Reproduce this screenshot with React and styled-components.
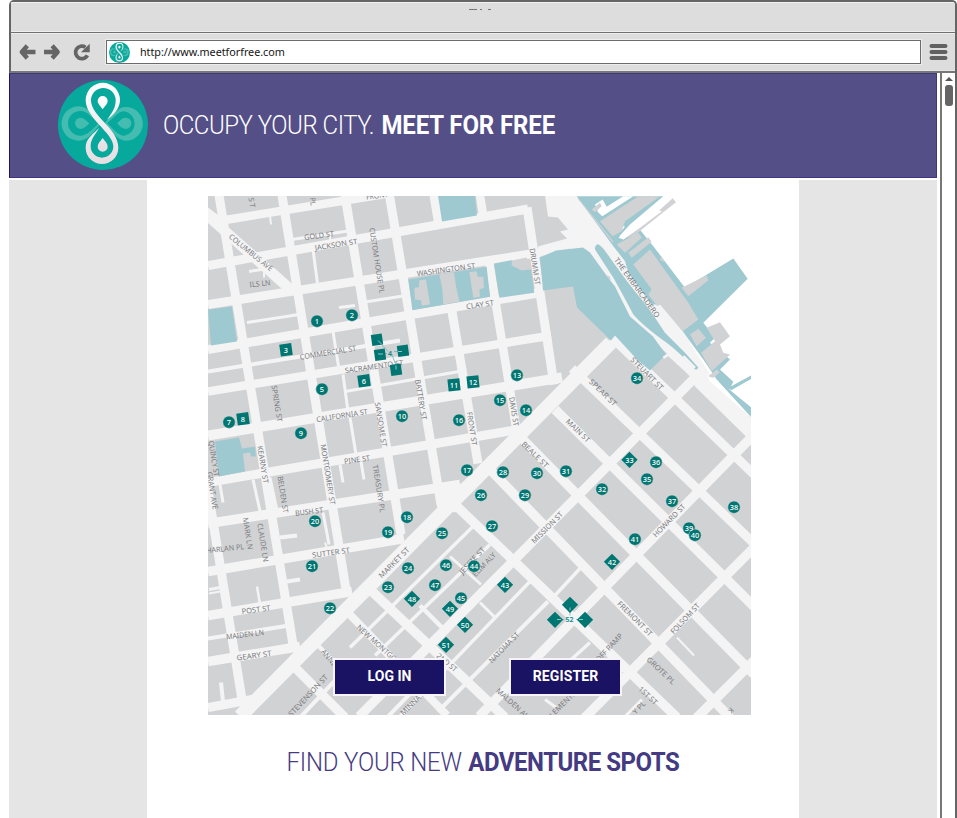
import React from 'react';
import styled, { createGlobalStyle } from 'styled-components';

const Global = createGlobalStyle`
  * { box-sizing: border-box; }
  body { margin: 0; background: #fff; font-family: 'Noto Sans', sans-serif; overflow: hidden; }
`;

const Frame = styled.div`
  width: 948px;
  height: 818px;
  margin-left: 9px;
  display: flex;
  flex-direction: column;
  border: 2px solid #656565;
  border-bottom: 0;
  border-left: 0;
  border-radius: 5px 5px 0 0;
  overflow: hidden;
`;
const TitleBar = styled.div`
  height: 31px;
  flex: none;
  background: #ddd;
  border-bottom: 1px solid #707070;
  border-left: 2px solid #656565;
  box-shadow: inset 0 1px #f2f2f2, inset 0 -1px #eee;
  padding: 4px 0 0 458px;
  line-height: 0;
`;
const ToolBar = styled.div`
  height: 40px;
  flex: none;
  display: flex;
  align-items: center;
  background: #ddd;
  border-bottom: 2px solid #777a74;
  border-left: 2px solid #656565;
  box-shadow: inset 0 1px #eee, inset 0 -1px #e6e6e6;
  padding: 0 7px;
`;
const NavIcons = styled.svg`
  width: 76px;
  height: 24px;
  display: block;
`;
const AddressBar = styled.div`
  width: 816px;
  height: 24px;
  margin-left: 12px;
  border: 1px solid #6c6c6c;
  box-shadow: 0 0 0 1px #ededed;
  background: #fff;
  display: flex;
  align-items: center;
  padding-left: 2px;
  gap: 10px;
  color: #151515;
`;
const Url = styled.span`
  font-size: 10.8px;
  letter-spacing: -0.03px;
  line-height: 20px;
`;
const MenuIcon = styled.svg`
  width: 19px;
  height: 18px;
  margin-left: 8px;
  display: block;
`;
const Viewport = styled.div`
  flex: 1;
  display: flex;
  min-height: 0;
`;
const Page = styled.div`
  width: 928px;
  height: 745px;
  flex: none;
  display: flex;
  flex-direction: column;
`;
const Banner = styled.header`
  height: 105px;
  flex: none;
  display: flex;
  align-items: center;
  padding: 0 0 1px 48px;
  gap: 15px;
  background: #554f88;
  border: 1px solid #3f3582;
  border-left: 1.5px solid #1e1464;
`;
const Logo = styled.svg`
  width: ${(p) => p.$size}px;
  height: ${(p) => p.$size}px;
  display: block;
  flex: none;
`;
const Headline = styled.h1`
  margin: 0;
  display: flex;
  gap: ${(p) => p.$gap}px;
  font-family: Roboto, sans-serif;
  font-size: 25.5px;
  line-height: 30px;
  font-weight: 300;
  white-space: nowrap;
  color: ${(p) => p.$color};
  transform: scaleX(0.94);
  transform-origin: ${(p) => p.$origin} center;
`;
const Phrase = styled.span`
  font-weight: ${(p) => (p.$bold ? 700 : 300)};
  letter-spacing: ${(p) => p.$track}px;
`;
const Body = styled.main`
  flex: 1;
  margin-top: 2px;
  display: flex;
  justify-content: center;
  background: #e5e5e5;
`;
const Sheet = styled.section`
  width: 652px;
  margin-right: 1px;
  background: #fff;
  display: flex;
  flex-direction: column;
  align-items: center;
  padding-top: 16px;
`;
const MapPanel = styled.div`
  width: 543px;
  height: 519px;
  position: relative;
  margin-left: 14px;
`;
const MapArt = styled.svg`
  display: block;
  width: 543px;
  height: 519px;
  font-family: 'Noto Sans', sans-serif;
`;
const Actions = styled.div`
  position: absolute;
  left: 125px;
  top: 462px;
  display: flex;
  gap: 63px;
`;
const Action = styled.button`
  width: 113px;
  height: 38px;
  padding: 0 0 2px;
  border: 2px solid #f6f3fa;
  background: #1a1262;
  color: #fff;
  font: 700 14px Roboto, sans-serif;
  letter-spacing: ${(p) => p.$track}px;
`;
const Tagline = styled.div`
  margin: 32px 0 0 20px;
`;
const Scroll = styled.div`
  width: 15px;
  margin-left: 3px;
  border-left: 2px solid #777;
  display: flex;
  flex-direction: column;
  align-items: center;
  padding: 4px 0 0 0;
  gap: 4px;
`;
const Thumb = styled.div`
  width: 8px;
  height: 21px;
  border-radius: 3px;
  background: #656565;
`;
const Arrow = styled.svg`
  width: 8px;
  height: 4px;
  display: block;
`;

function Mark({ size }) {
  return (
    <Logo $size={size} viewBox="173 241 270 270">
      <defs>
        <linearGradient id="sheen" x1="0" y1="0" x2="0" y2="1">
          <stop offset="0" stopColor="#fff" />
          <stop offset="1" stopColor="#e4dde2" />
        </linearGradient>
      </defs>
      <circle cx="308" cy="376" r="135" fill="#06a99c" />
      <g fill="#44bcb0" fillRule="evenodd">
        <path d="M302 370C280 347 263 320 235 320A51 51 0 0 0 235 423C265 423 280 395 302 370ZM296 370C273 353 260 334 240 334A37 37 0 0 0 240 408C260 408 275 390 296 370Z" />
        <path d="M314 370C336 347 350 322 377 322A50 50 0 0 1 377 423C350 423 336 395 314 370ZM320 370C343 353 353 335 372 335A37 37 0 0 1 372 408C353 408 341 390 320 370Z" />
        <path d="M267 371C255 360 249 354 241 354A17 17 0 0 0 241 388C249 388 256 382 267 371ZM350 371C361 360 367 354 376 354A17 17 0 0 1 376 388C367 388 361 382 350 371Z" />
      </g>
      <path d="M272 302C272 330 288 350 312 368C330 348 346 325 346 302ZM271 440C271 420 283 400 299 380C325 402 339 418 339 440Z" fill="#06a99c" />
      <g fill="url(#sheen)">
        <path d="M256 301A51 51 0 0 1 359 301C359 326 341 344 320 361C335 339 346 325 346 302A37 37 0 0 0 272 302C272 350 354 386 354 444A49 49 0 0 1 256 444C256 416 276 405 297 384C285 405 271 417 271 440A34 34 0 0 0 339 440C339 400 256 356 256 301Z" />
        <path d="M307 329C299 318 292 312 292 304A15 15 0 0 1 322 304C322 312 315 318 307 329ZM307 415C299 426 292 432 292 441A15 15 0 0 0 322 441C322 432 315 426 307 415Z" />
      </g>
    </Logo>
  );
}

/* Street centre lines: width, then end points. */
const ROADS = [
  [8, 219, 196, 293, 645], [8, 282, 196, 346, 590], [8, 345, 196, 401, 535],
  [8, 389.5, 196, 441, 505], [8, 434, 196, 439, 226], [8, 452, 312, 478, 464],
  [7.5, 480, 196, 483, 215], [7.5, 489, 262, 516, 428], [8, 527, 208, 554, 385],
  [7.5, 222, 221, 388, 194], [8, 208, 266, 528, 209.5], [8, 208, 305, 540, 253],
  [8, 208, 350, 541, 293], [7.5, 208, 392, 551, 336], [9, 208, 436, 562, 378],
  [8, 208, 483, 518, 430], [8.5, 208, 524, 460, 485], [8.5, 208, 572, 404, 539],
  [8.5, 208, 616, 352, 592], [4, 208, 639, 289, 626], [8.5, 208, 662, 300, 647],
  [8, 208, 708, 252, 700], [8, 207, 485, 243, 706], [9.5, 204, 213, 294, 293],
  [3, 247, 323, 299, 315], [4, 208, 372, 400, 341], [3, 362, 303, 406, 296],
  [3, 292, 240, 348, 231.5], [3, 313, 250, 318, 288], [3, 333, 332, 339, 370],
  [3, 343, 375, 348, 412], [3, 350, 418, 356, 455], [3, 340, 465, 343, 483],
  [3, 361, 462, 364, 480], [3, 253, 480, 261, 516], [3, 220, 485, 223, 503],
  [3, 270, 478, 278, 516], [4, 280, 538, 297, 536], [3, 323, 513, 329, 545],
  [3, 345, 392, 459, 372], [4, 287, 582, 300, 580], [2.5, 257, 587, 260, 605],
  [4, 221, 683, 223, 702], [3, 209, 590, 220, 588], [2, 209, 594, 220, 592],
  [3, 249, 272, 267, 269], [2, 264, 270, 264, 278], [2, 270, 216, 271, 225],
  [3, 339, 308, 355, 306], [2, 330, 236, 330, 241], [2, 325, 543, 327, 549],
  [13, 240, 717, 611, 343], [8, 612, 338, 754, 475], [8, 572, 369, 754, 544],
  [8.5, 555, 410, 754, 607], [8.5, 520, 437, 754, 675], [8.5, 490, 470, 730, 718],
  [8.5, 455, 505, 677, 718], [8.5, 370, 590, 505, 718], [7, 348, 613, 447, 716],
  [8.5, 290, 663, 345, 718], [8.5, 359, 717, 702, 371], [8.5, 479, 717, 754, 435],
  [8.5, 583, 720, 754, 548], [8.5, 695, 720, 754, 661], [3.5, 350, 648, 475, 525],
  [3.5, 375, 656, 490, 545], [3, 450, 557, 481, 585], [4.5, 420, 606, 443, 629],
  [3.5, 400, 717, 530, 582], [4, 438, 712, 548, 602], [3, 480, 603, 495, 618],
  [3.5, 553, 598, 580, 569], [3.5, 558, 672, 590, 643], [2, 677, 638, 694, 656],
  [4, 318, 646, 338, 666], [4, 388, 717, 420, 684], [3, 545, 700, 556, 708],
  [3, 642, 700, 625, 717], [4, 300, 718, 336, 680],
];

/* text, centre x, centre y, angle, drawn length */
const STREETS = [
  ['COLUMBUS AVE', 251, 253, 39, 54], ['GOLD ST', 319, 236, -7, 30], ['JACKSON ST', 336, 245, -9, 43],
  ['CUSTOM HOUSE PL', 377, 261, 81, 66], ['ILS LN', 260, 284, -6, 21], ['ST', 252, 203, 81, 10], ['PL', 313, 202, 81, 8],
  ['COMMERCIAL ST', 328, 353, -9, 57], ['SACRAMENTO ST', 374, 367, -8, 59], ['WASHINGTON ST', 446, 270, -8, 59],
  ['CLAY ST', 480, 305, -8, 28], ['DRUMM ST', 535, 267, 81, 37], ['THE EMBARCADERO', 637, 288, 54, 72],
  ['STEUART ST', 647, 374, 45, 43], ['SPEAR ST', 603, 393, 44, 35], ['MAIN ST', 578, 431, 44, 30],
  ['BEALE ST', 535, 455, 44, 34], ['SPRING ST', 277, 404, 81, 37], ['CALIFORNIA ST', 342, 416, -9, 52],
  ['SANSOME ST', 381, 425, 81, 45], ['BATTERY ST', 421, 400, 81, 41], ['FRONT ST', 472, 429, 81, 34],
  ['DAVIS ST', 514, 412, 81, 29], ['QUINCY ST', 214, 459, 81, 36], ['GRANT AVE', 212.5, 491, 81, 38],
  ['KEARNY ST', 263, 465, 81, 38], ['BELDEN ST', 283, 495, 81, 37], ['MONTGOMERY ST', 328, 475, 81, 61],
  ['PINE ST', 357, 460, -8, 26], ['TREASURY PL', 379, 489, 81, 48], ['BUSH ST', 309, 512, -7, 28],
  ['MARK LN', 248, 534, 81, 32], ['CLAUDE LN', 263, 543, 81, 39], ['HARLAN PL', 225, 549, -6, 38],
  ['SUTTER ST', 331, 553, -8, 38], ['POST ST', 256, 610, -7, 29], ['MAIDEN LN', 245, 635, -7, 38],
  ['GEARY ST', 254, 656, -8, 35], ['MARKET ST', 394, 563, -45, 40], ['MISSION ST', 547, 528, -45, 41],
  ['HOWARD ST', 669, 521, -46, 43], ['FOLSOM ST', 685, 619, -47, 39], ['FREMONT ST', 635, 619, 45, 46],
  ['JESSIE ST', 472, 561, -47, 34], ['ELIM ALY', 484, 565, -46, 30], ['NATOMA ST', 504, 648, -46, 40],
  ['2ND ST', 447, 663, 40, 24], ['NEW MONTGOMERY', 384, 650, 42, 70], ['ANNIE ST', 333, 663, 50, 32],
  ['STEVENSON ST', 308, 696, -47, 54], ['MINNA ST', 414, 702, -45, 35], ['MALDEN ALY', 514, 705, 42, 45],
  ['CLEMENTINA', 564, 703, -45, 48], ['OFF RAMP', 609, 648, -47, 36], ['GROTE PL', 661, 671, 43, 36],
  ['1ST ST', 648, 696, 43, 23], ['Y PL', 639, 708, -45, 15], ['FRONT', 377, 196, -8, 22], ['K', 731, 711, 135, 5],
];

const DOTS = [
  [1, 317, 321], [2, 352, 315], [5, 322, 389], [7, 229, 422], [9, 301, 433], [10, 402, 416], [13, 517, 375],
  [14, 526, 410], [15, 500, 400], [16, 459, 420], [17, 467, 470], [18, 407, 517], [19, 388, 532], [20, 315, 521],
  [21, 312, 566], [22, 330, 608], [23, 388, 587], [24, 408, 568], [25, 442, 533], [26, 481, 495], [27, 492, 526],
  [28, 503, 472], [29, 525, 495], [30, 537, 473], [31, 566, 471], [32, 602, 489], [34, 637, 378], [35, 647, 479],
  [36, 656, 462], [37, 672, 501], [38, 734, 507], [39, 689, 528], [40, 695, 535], [41, 635, 539],
  [44, 474, 566], [45, 461, 598], [46, 446, 565], [47, 435, 585],
];
/* label, x, y, angle, side */
const BOXES = [
  [3, 286, 350, -8, 12], [6, 364, 381, -8, 12], [8, 243, 419, -8, 12], [11, 454, 385, -6, 12], [12, 473, 382, -6, 12],
  [33, 629.5, 460, 45, 11.5], [42, 612, 562, 45, 11.5], [43, 505, 585, 45, 11.5], [48, 412, 599, 45, 11.5],
  [49, 450, 609, 45, 11.5], [50, 465, 625, 45, 11.5], [51, 446, 645, 45, 11.5],
  ['', 377, 340, -8, 11], ['', 380, 355, -8, 11], ['', 403, 351, -8, 11], ['', 396, 370, -8, 11],
  ['', 570, 605, 45, 11.5], ['', 555, 620, 45, 11.5], ['', 585, 620, 45, 11.5],
];

function CityMap() {
  return (
    <MapArt viewBox="208 196.5 543 519">
      <rect x="208" y="196" width="544" height="520" fill="#d1d2d4" />
      <g stroke="#f4f4f5">
        {ROADS.map(([w, x1, y1, x2, y2], i) => (
          <line key={i} strokeWidth={w > 6 ? w + 1 : w} x1={x1} y1={y1} x2={x2} y2={y2} />
        ))}
      </g>
      <path fill="#f4f4f5" d="M208 208L224 220L224 236L208 222ZM545 196L548 217L558 218L568 230L560 232L567 239L538 247L540 257L570 249L612 290L630 320L666 353L690 377L695 387L745 436L752 443V400L700 330L640 196Z" />
      <path fill="#f4f4f5" d="M437 495L468 481L464 498L455 513L437 508Z" />
      <path fill="#fff" d="M577 196H752V419L710 382L685 333L613 245Z" />
      <g fill="#9fc9d0">
        <path d="M438 196H475L477 216L442 222ZM208 310L232 307L237 342L211 346ZM215 442L239 438L242 449L255 447L256 457L251 457L250 453L243 454L245 472L219 477Z" />
        <path d="M540 258L556 251L583 248L590 253L608 278L615 287L630 317L653 337L666 355L650 371L637 360L615 336L611 341L577 308L573 287L543 291Z" />
      </g>
      <g transform="translate(380 190) scale(.33333)">
        <path fill="#9fc9d0" d="M85 270L320 232L330 322L97 362ZM342 222L395 212L425 240H453L463 310L358 325Z" />
        <path fill="#d1d2d4" d="M178 255L222 248L228 290L238 337L190 345L187 300ZM118 272L138 270L150 345L125 348L123 332L105 330L103 295L117 293ZM268 248L290 245L293 262L310 262L312 295L298 300L300 322L280 325ZM395 213L440 204L450 240L425 243L395 228Z" />
      </g>
      <g transform="translate(570 190) scale(.33333)">
        <path fill="#9fc9d0" d="M20 20L130 170L165 215L175 250L245 345L275 345L345 435L400 510L440 570L545 685V655L478 600L490 577L450 540L480 510L455 490L420 460L435 445L400 400L533 268L490 207L345 295L250 170L205 115L160 150L148 140L180 105L280 20Z" />
        <path fill="#9fc9d0" d="M75 180Q74 166 84 164Q94 166 120 205Q180 290 215 330Q270 405 310 445L385 530Q384 542 375 540Q330 490 290 460Q220 410 190 375Q150 300 130 265Z" />
        <path fill="#fff" d="M84 68L97 80L190 20H160L110 52L98 30L75 45ZM145 145L270 60L278 70L160 150ZM165 110L160 118L145 130L150 112Z" />
        <path fill="#f4f4f5" d="M270 355L285 360L340 428L395 515L430 570L395 545L345 490L285 430L245 370Z" />
        <g fill="#d1d2d4">
          <path d="M20 20L130 155L128 160L25 30ZM90 95L205 20H270L165 95L155 125L128 140ZM65 60L90 40L95 50L75 68ZM140 165L205 130L215 145L165 190ZM175 190L235 143L245 157L185 205ZM190 225L240 180L355 340L385 390L338 425L270 345L262 350L235 315L245 300ZM335 295L410 258L415 272L355 320ZM360 435L385 418L408 445L380 470ZM410 415L450 398L480 440L450 465L460 490L480 495L425 545L393 490L435 455ZM268 62L308 26L318 38L280 68ZM275 200L285 220L270 210ZM105 255L120 262L122 272ZM415 560L440 540L450 548L430 565Z" />
          <path d="M170 145L276 65L279 69L190 140Z" />
        </g>
        <path fill="#9fc9d0" d="M478 593L545 557V567L482 603Z" />
        <path stroke="#f4f4f5" strokeWidth="8" fill="none" d="M280 505L295 495L345 540M340 500L375 535" />
      </g>
      <g fill="#7b7c7f" fontSize="7.4" textAnchor="middle">
        {STREETS.map(([name, x, y, a, len]) => (
          <text key={name + x} transform={`translate(${x} ${y}) rotate(${a})`} y="2.7" textLength={len} lengthAdjust={name.length > 3 ? 'spacingAndGlyphs' : 'spacing'}>
            {name}
          </text>
        ))}
      </g>
      <g stroke="#5ab0b6" strokeWidth=".7">
        <path d="M377 340L388 352M382 354H387M394 352H400M392 355L396 366M570 607V616M557 620H564M576 620H583" />
      </g>
      <g fill="#007672">
        {DOTS.map(([n, x, y]) => (
          <circle key={n} cx={x} cy={y + 0.7} r="6.2" stroke="#eadfe0" strokeWidth=".5" />
        ))}
        {BOXES.map(([n, x, y, a, s], i) => (
          <rect key={i} x={-s / 2} y={-s / 2} width={s} height={s} transform={`translate(${x} ${y + 0.3}) rotate(${a})`} />
        ))}
      </g>
      <g fill="#fff" fontSize="7.4" fontWeight="500" textAnchor="middle">
        {[...DOTS, ...BOXES].map(([n, x, y], i) => (
          <text key={i} x={x - 0.1} y={y + 3.3}>{n}</text>
        ))}
      </g>
      <g fill="#07888a" fontSize="7" fontWeight="600" textAnchor="middle">
        <text x="390" y="356">4</text>
        <text x="569.5" y="622.5">52</text>
      </g>
      <path d="M378 341L382 345M378 354.5H383M398 352H402M396 366V370M557 620H561M579 620H583M570 608V611" stroke="#b5dcdc" strokeWidth=".8" />
    </MapArt>
  );
}

export default function App() {
  return (
    <>
      <Global />
      <Frame>
        <TitleBar>
          <svg width="26" height="4"><path d="M0 1.5H8M11 1.5H13M19 1.5H22" stroke="#777" strokeWidth="1" /></svg>
        </TitleBar>
        <ToolBar>
          <NavIcons viewBox="0 0 76 24" fill="none" stroke="#656565" strokeWidth="4.4">
            <path d="M17.5 12H4.5M9.3 5.8L3.8 12L9.3 18.2M26 12H39M34.2 5.8L39.7 12L34.2 18.2" strokeLinejoin="round" />
            <path d="M69.5 15.4A6.3 6.3 0 1 1 67.5 7.2" strokeWidth="3.8" />
            <path d="M71.8 3.8V12.2H63Z" fill="#656565" stroke="none" />
          </NavIcons>
          <AddressBar>
            <Mark size={21} />
            <Url>http://www.meetforfree.com</Url>
          </AddressBar>
          <MenuIcon viewBox="0 0 19 18" stroke="#616161" strokeWidth="4" strokeLinecap="round">
            <path d="M2.5 3H16.5M2.5 9H16.5M2.5 15H16.5" />
          </MenuIcon>
        </ToolBar>
        <Viewport>
          <Page>
            <Banner>
              <Mark size={90} />
              <Headline $color="#fff" $gap={8} $origin="left">
                <Phrase $track={-0.5}>OCCUPY YOUR CITY.</Phrase>
                <Phrase $bold $track={-0.1}>MEET FOR FREE</Phrase>
              </Headline>
            </Banner>
            <Body>
              <Sheet>
                <MapPanel>
                  <CityMap />
                  <Actions>
                    <Action $track={0}>LOG IN</Action>
                    <Action $track={0.1}>REGISTER</Action>
                  </Actions>
                </MapPanel>
                <Tagline>
                  <Headline $color="#443b82" $gap={7} $origin="center">
                    <Phrase $track={-0.2}>FIND YOUR NEW</Phrase>
                    <Phrase $bold $track={-0.5}>ADVENTURE SPOTS</Phrase>
                  </Headline>
                </Tagline>
              </Sheet>
            </Body>
          </Page>
          <Scroll>
            <Arrow viewBox="0 0 8 4"><path d="M0 4L4 0L8 4Z" fill="#555" /></Arrow>
            <Thumb />
          </Scroll>
        </Viewport>
      </Frame>
    </>
  );
}
